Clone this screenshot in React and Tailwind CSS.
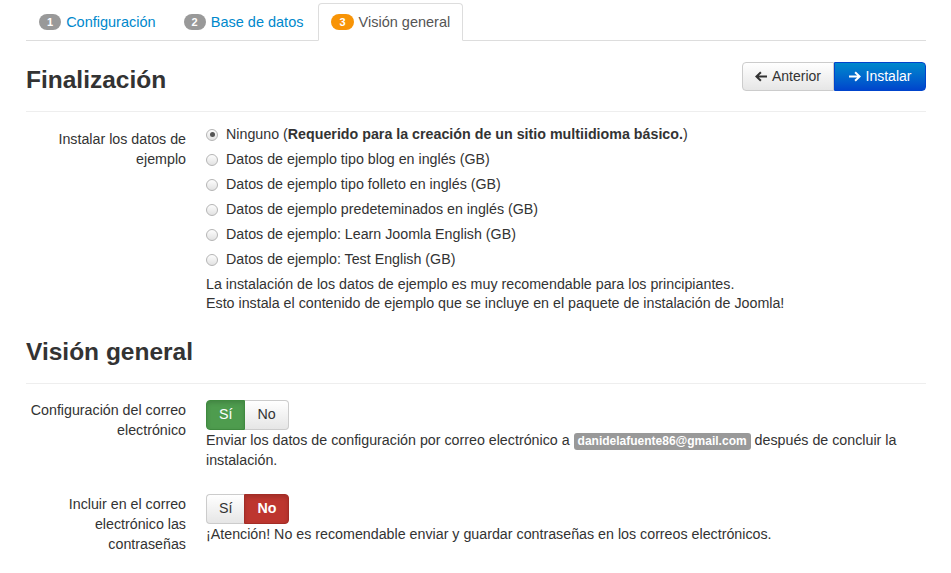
import React from "react";

const Badge = ({ n, active }) => (
  <span
    className={`inline-block rounded-[9px] px-[8px] text-[11px] font-bold leading-[16px] text-white ${
      active ? "bg-[#f89406]" : "bg-[#999999]"
    }`}
  >
    {n}
  </span>
);

const Radio = ({ checked, children }) => (
  <label className="flex h-[25px] items-center">
    <span className="mr-[8px] flex h-[12px] w-[12px] items-center justify-center rounded-full border border-[#b5b5b5] bg-gradient-to-b from-[#fdfdfd] to-[#e2e2e2]">
      {checked && <span className="h-[5px] w-[5px] rounded-full bg-[#555]" />}
    </span>
    <span>{children}</span>
  </label>
);

const ArrowLeft = () => (
  <svg width="12" height="11" viewBox="0 0 12 11" className="mr-[5px]">
    <path d="M0 5.5 L5.2 0.5 L6.6 1.9 L3.8 4.5 H12 V6.5 H3.8 L6.6 9.1 L5.2 10.5 Z" fill="#333" />
  </svg>
);

const ArrowRight = () => (
  <svg width="12" height="11" viewBox="0 0 12 11" className="mr-[5px]">
    <path d="M12 5.5 L6.8 0.5 L5.4 1.9 L8.2 4.5 H0 V6.5 H8.2 L5.4 9.1 L6.8 10.5 Z" fill="#fff" />
  </svg>
);

const Row = ({ label, pad, children }) => (
  <div className="flex">
    <div className={`w-[160px] shrink-0 text-right leading-[20px] ${pad}`}>{label}</div>
    <div className="ml-[20px] flex-1">{children}</div>
  </div>
);

export default function App() {
  return (
    <div
      className="min-h-[573px] bg-white px-[26px] pr-[25px] text-[14.25px] text-[#333]"
      style={{ fontFamily: '"Liberation Sans", Arial, sans-serif' }}
    >
      {/* tabs */}
      <div className="flex border-b border-[#dddddd] pt-[3px] text-[14.5px]">
        <a className="mr-[2px] flex items-center gap-[5px] px-[13px] py-[8px] leading-[20px] text-[#0088cc]">
          <Badge n="1" /> Configuración
        </a>
        <a className="mr-[2px] flex items-center gap-[5px] px-[13px] py-[8px] leading-[20px] text-[#0088cc]">
          <Badge n="2" /> Base de datos
        </a>
        <a className="-mb-px flex items-center gap-[5px] rounded-t-[4px] border border-[#dddddd] border-b-white bg-white px-[12px] py-[8px] leading-[20px] text-[#555]">
          <Badge n="3" active /> Visión general
        </a>
      </div>

      {/* header */}
      <div className="mt-[21px] flex items-start justify-between">
        <h2 className="pt-[4px] text-[24.5px] font-bold leading-[28px] text-[#333]">Finalización</h2>
        <div className="flex text-[14px]">
          <button className="flex h-[29px] w-[92px] items-center justify-center rounded-l-[4px] border border-[#cccccc] bg-gradient-to-b from-white to-[#e6e6e6] text-[#333]">
            <ArrowLeft /> Anterior
          </button>
          <button className="flex h-[29px] w-[92px] items-center justify-center rounded-r-[4px] border border-[#0044cc] bg-gradient-to-b from-[#0088cc] to-[#0044cc] text-white">
            <ArrowRight /> Instalar
          </button>
        </div>
      </div>
      <div className="mt-[17px] border-t border-[#eeeeee]" />

      {/* sample data */}
      <div className="mt-[12px]">
        <Row label="Instalar los datos de ejemplo" pad="pt-[5px]">
          <div className="-mt-[2px]">
            <Radio checked>
              Ninguno (<b>Requerido para la creación de un sitio multiidioma básico.</b>)
            </Radio>
            <Radio>Datos de ejemplo tipo blog en inglés (GB)</Radio>
            <Radio>Datos de ejemplo tipo folleto en inglés (GB)</Radio>
            <Radio>Datos de ejemplo predeteminados en inglés (GB)</Radio>
            <Radio>Datos de ejemplo: Learn Joomla English (GB)</Radio>
            <Radio>Datos de ejemplo: Test English (GB)</Radio>
            <p className="mt-[3px] leading-[19px]">
              La instalación de los datos de ejemplo es muy recomendable para los principiantes.
              <br />
              Esto instala el contenido de ejemplo que se incluye en el paquete de instalación de Joomla!
            </p>
          </div>
        </Row>
      </div>

      {/* overview */}
      <h2 className="mt-[25px] text-[24.5px] font-bold leading-[28px] text-[#333]">Visión general</h2>
      <div className="mt-[17px] border-t border-[#eeeeee]" />

      <div className="mt-[16px]">
        <Row label="Configuración del correo electrónico" pad="pt-0">
          <div className="flex">
            <button className="h-[30px] rounded-l-[4px] border border-[#3f8a3f] bg-[#4e9c4e] px-[12px] text-white shadow-[inset_0_2px_4px_rgba(0,0,0,0.15)]">
              Sí
            </button>
            <button className="h-[30px] rounded-r-[4px] border border-l-0 border-[#cccccc] bg-gradient-to-b from-white to-[#e6e6e6] px-[12px] text-[#333]">
              No
            </button>
          </div>
          <p className="leading-[20px]">
            Enviar los datos de configuración por correo electrónico a{" "}
            <span className="inline-block rounded-[3px] bg-[#999999] px-[4px] text-[12px] font-bold leading-[17px] text-white">
              danidelafuente86@gmail.com
            </span>{" "}
            después de concluir la instalación.
          </p>
        </Row>
      </div>

      <div className="mt-[24px]">
        <Row label="Incluir en el correo electrónico las contraseñas" pad="pt-0">
          <div className="flex">
            <button className="h-[30px] rounded-l-[4px] border border-r-0 border-[#cccccc] bg-gradient-to-b from-white to-[#e6e6e6] px-[12px] text-[#333]">
              Sí
            </button>
            <button className="h-[30px] rounded-r-[4px] border border-[#a32c26] bg-[#bd362f] px-[12px] font-bold text-white shadow-[inset_0_2px_4px_rgba(0,0,0,0.15)]">
              No
            </button>
          </div>
          <p className="leading-[20px]">
            ¡Atención! No es recomendable enviar y guardar contraseñas en los correos electrónicos.
          </p>
        </Row>
      </div>
    </div>
  );
}
